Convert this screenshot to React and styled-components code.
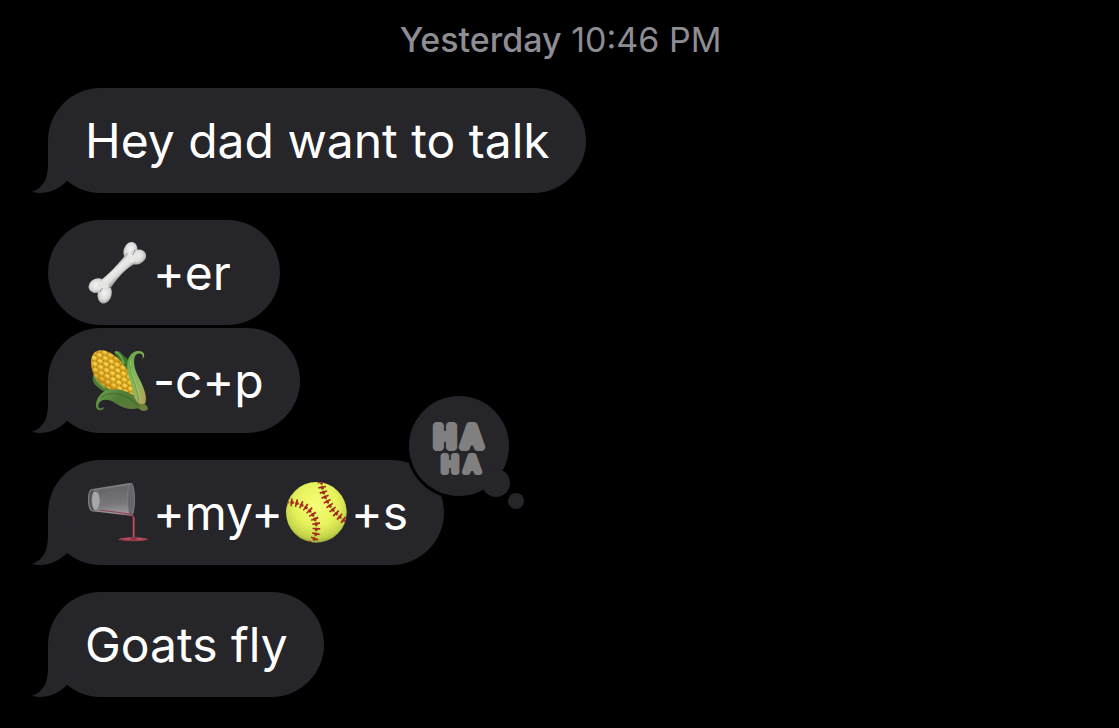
import React from 'react'
import styled, { createGlobalStyle } from 'styled-components'


const GlobalStyle = createGlobalStyle`
    * {
        box-sizing: border-box;
    }
    body {
        margin: 0;
        background-color: #000;
        font-family: Inter, "Liberation Sans", sans-serif;
    }
`

const Main = styled.main`
    display: flex;
    flex-direction: column;
    min-height: 100vh;
    padding: 20px 48px 31px;
`

const Timestamp = styled.time`
    align-self: center;
    margin-bottom: 28px;
    padding-left: 2px;
    font-size: 34px;
    line-height: 40px;
    color: #8d8d93;
    strong {
        font-weight: 500;
    }
`

const Thread = styled.ol`
    display: flex;
    flex-direction: column;
    align-items: flex-start;
    margin: 0;
    padding: 0;
    list-style: none;
`

const Bubble = styled.li`
    position: relative;
    display: flex;
    align-items: center;
    min-height: 105px;
    margin-bottom: ${props => props.$grouped ? '3px' : '27px'};
    padding: 0 36px 0 37px;
    border-radius: 53px;
    background-color: #26252a;
    color: #fff;
    font-size: 48px;
    line-height: 60px;
    white-space: pre;
    &:last-child {
        margin-bottom: 0;
    }
`

const TailShape = styled.svg`
    position: absolute;
    left: -16px;
    bottom: 0;
    width: 40px;
    height: 60px;
`

const Emoji = styled.svg`
    flex: none;
    width: 66px;
    height: 66px;
    margin-right: 2px;
`

const Reaction = styled.svg`
    position: absolute;
    right: -84px;
    top: -68px;
    width: 124px;
    height: 120px;
    font-family: Inter, "Liberation Sans", sans-serif;
    font-weight: 500;
`

const Tail = () => (
    <TailShape viewBox="0 0 40 60" aria-hidden="true">
        <path d="M16 8V31C16 46 11 55 0 59C12 62 25 58 35 48L36 8Z" fill="#26252a" />
    </TailShape>
)

const Bone = () => (
    <Emoji viewBox="15 15 198 198" role="img" aria-label="bone">
        <defs>
            <radialGradient id="knob" cx="48%" cy="44%" r="60%">
                <stop offset="0" stopColor="#f4f4f3" />
                <stop offset="0.6" stopColor="#dcdcdb" />
                <stop offset="1" stopColor="#9a9a9a" />
            </radialGradient>
            <linearGradient id="shaft" gradientUnits="userSpaceOnUse" x1="95" y1="95" x2="123" y2="125">
                <stop offset="0" stopColor="#a4a4a4" />
                <stop offset="0.35" stopColor="#ececeb" />
                <stop offset="0.7" stopColor="#e0e0df" />
                <stop offset="1" stopColor="#a0a0a0" />
            </linearGradient>
        </defs>
        <ellipse cx="151" cy="47" rx="20" ry="27" transform="rotate(20 151 47)" fill="url(#knob)" />
        <ellipse cx="171" cy="66" rx="28" ry="22" transform="rotate(-20 171 66)" fill="url(#knob)" />
        <ellipse cx="51" cy="152" rx="26" ry="21" transform="rotate(-25 51 152)" fill="url(#knob)" />
        <ellipse cx="74" cy="177" rx="21" ry="29" transform="rotate(14 74 177)" fill="url(#knob)" />
        <path d="M60 138C85 118 108 95 129 69L141 53L168 78L158 90C134 104 112 130 94 156L76 166Z" fill="url(#shaft)" />
        <ellipse cx="156" cy="68" rx="18" ry="15" transform="rotate(-30 156 68)" fill="#e6e6e5" />
        <ellipse cx="69" cy="153" rx="17" ry="15" fill="#e4e4e3" />
        <path d="M165 43Q164 54 157 60M60 172Q62 163 68 159" fill="none" stroke="#8f8f8f" strokeWidth="3" />
    </Emoji>
)

const Corn = () => (
    <Emoji viewBox="15 18 198 198" role="img" aria-label="corn">
        <defs>
            <pattern id="kernels" width="20" height="30" patternUnits="userSpaceOnUse" patternTransform="rotate(28)">
                <rect width="20" height="30" fill="#bb8413" />
                <g fill="#e6b82d">
                    <rect x="1" y="1" width="18" height="13" rx="6" />
                    <rect x="-9" y="16" width="18" height="13" rx="6" />
                    <rect x="11" y="16" width="18" height="13" rx="6" />
                </g>
                <g fill="#fbdc58">
                    <ellipse cx="10" cy="6" rx="6" ry="3" />
                    <ellipse cx="0" cy="21" rx="6" ry="3" />
                    <ellipse cx="20" cy="21" rx="6" ry="3" />
                </g>
            </pattern>
            <linearGradient id="cobShade" x1="0.2" y1="0.8" x2="0.7" y2="0.2">
                <stop offset="0" stopColor="#8b5200" stopOpacity="0.5" />
                <stop offset="0.4" stopColor="#c98600" stopOpacity="0" />
                <stop offset="0.8" stopColor="#c98600" stopOpacity="0" />
                <stop offset="1" stopColor="#8b5200" stopOpacity="0.3" />
            </linearGradient>
            <linearGradient id="husk" x1="0" y1="0" x2="0.6" y2="1">
                <stop offset="0" stopColor="#5c9f3f" />
                <stop offset="0.4" stopColor="#7fb558" />
                <stop offset="0.75" stopColor="#92b65d" />
                <stop offset="1" stopColor="#aca558" />
            </linearGradient>
            <linearGradient id="huskLow" x1="0" y1="0" x2="1" y2="0.4">
                <stop offset="0" stopColor="#72a84a" />
                <stop offset="0.5" stopColor="#4f7d36" />
                <stop offset="1" stopColor="#5d7a38" />
            </linearGradient>
        </defs>
        <path d="M102 31C111 22 122 29 130 40C136 47 143 48 145 57L143 91L128 78C121 59 111 43 102 31Z" fill="#3c742d" />
        <path d="M105 30Q122 32 132 65" fill="none" stroke="#6ea34a" strokeWidth="6" />
        <path d="M43 94C33 111 39 125 55 137L75 151L91 143C68 131 52 115 43 94Z" fill="#4d7d34" />
        <path d="M43 100Q50 121 75 139" fill="none" stroke="#78a852" strokeWidth="4" />
        <path d="M35 78C30 52 35 31 54 26C82 20 112 43 130 67C152 95 163 129 162 160C132 157 112 148 91 143C66 133 40 108 35 78Z" fill="url(#kernels)" />
        <path d="M35 78C30 52 35 31 54 26C82 20 112 43 130 67C152 95 163 129 162 160C132 157 112 148 91 143C66 133 40 108 35 78Z" fill="url(#cobShade)" />
        <path d="M71 200C64 208 49 207 48 193C46 178 56 156 76 146C99 137 135 142 160 159L184 183C198 185 208 197 201 204C192 211 180 205 175 199C150 205 126 196 108 185C91 173 70 168 59 181C52 190 55 201 64 199L70 195Z" fill="url(#huskLow)" />
        <path d="M61 169Q84 149 116 156Q149 164 175 191" fill="none" stroke="#315f2a" strokeWidth="4" opacity="0.5" />
        <path d="M187 51C192 39 184 32 173 35C158 41 160 70 171 96C184 123 204 157 196 184C190 190 178 187 173 181C160 168 159 149 154 129C149 106 138 89 142 65C144 42 157 28 174 27C193 26 198 42 187 51Z" fill="url(#husk)" />
        <path d="M153 52Q147 72 161 108Q178 149 184 183" fill="none" stroke="#b0cf77" strokeWidth="3" opacity="0.6" />
        <path d="M151 72Q151 96 165 128L177 176" fill="none" stroke="#639641" strokeWidth="2" />
        <path d="M184 184Q194 194 200 191L204 201Q193 210 181 201Z" fill="#6e823c" />
    </Emoji>
)

const PouringGlass = () => (
    <Emoji viewBox="15 15 198 198" role="img" aria-label="pouring liquid">
        <defs>
            <linearGradient id="glass" x1="0" y1="0" x2="0.15" y2="1">
                <stop offset="0" stopColor="#8b8b8f" />
                <stop offset="0.25" stopColor="#66666b" />
                <stop offset="0.7" stopColor="#77777b" />
                <stop offset="1" stopColor="#98989b" />
            </linearGradient>
        </defs>
        <path d="M35 42L148 24C158 23 163 46 163 74C163 103 161 121 153 122L36 109C28 108 24 93 24 75C24 57 27 43 35 42Z" fill="url(#glass)" />
        <ellipse cx="153" cy="73" rx="11" ry="49" fill="#66676c" stroke="#88888d" strokeWidth="2" />
        <path d="M49 43L147 27M49 43C60 55 60 95 48 107" fill="none" stroke="#8b8b90" strokeWidth="2" />
        <ellipse cx="46" cy="77" rx="13" ry="27" fill="#a6a7a9" />
        <path d="M35 44C23 50 24 99 37 108L46 107C32 99 32 53 47 43Z" fill="#4d4e54" stroke="#8e8e93" strokeWidth="2" />
        <path d="M58 105L151 117Q160 119 161 126V192" fill="none" stroke="#95404f" strokeWidth="3" />
        <path d="M110 114L150 121Q158 123 158 130V190H164V126L153 119Z" fill="#a84253" />
        <ellipse cx="160" cy="193" rx="45" ry="6" fill="#8f3948" />
        <path d="M119 191Q161 184 202 192Q162 199 119 191Z" fill="#b84f5f" />
        <ellipse cx="161" cy="191" rx="10" ry="4" fill="#8c3443" />
        <path d="M161 130V186" stroke="#d37586" strokeWidth="1" />
    </Emoji>
)

const Softball = () => (
    <Emoji viewBox="12 15 198 198" role="img" aria-label="softball">
        <defs>
            <radialGradient id="ball" cx="50%" cy="38%" r="65%">
                <stop offset="0" stopColor="#f6ff78" />
                <stop offset="0.55" stopColor="#e6f25c" />
                <stop offset="0.85" stopColor="#c2d248" />
                <stop offset="1" stopColor="#8a9b32" />
            </radialGradient>
            <clipPath id="ballClip">
                <circle cx="112" cy="112" r="91" />
            </clipPath>
        </defs>
        <circle cx="112" cy="112" r="91" fill="url(#ball)" />
        <g clipPath="url(#ballClip)" fill="none">
            <path d="M20 82C66 79 106 104 112 151Q114 181 99 206M127 19C132 70 157 111 205 143" stroke="#a7b943" strokeWidth="3" />
            <path d="M20 82C66 79 106 104 112 151Q114 181 99 206" stroke="#a42a20" strokeWidth="23" strokeDasharray="5 10" />
            <path d="M127 19C132 70 157 111 205 143" stroke="#a42a20" strokeWidth="23" strokeDasharray="5 10" />
            <path d="M20 82C66 79 106 104 112 151Q114 181 99 206M127 19C132 70 157 111 205 143" stroke="#a42a20" strokeWidth="8" strokeDasharray="9 6" />
        </g>
    </Emoji>
)

const HaHa = () => (
    <Reaction viewBox="0 0 124 120" role="img" aria-label="Ha ha reaction">
        <circle cx="55" cy="54" r="53" fill="#000" />
        <g fill="#26252a">
            <circle cx="55" cy="54" r="50" />
            <circle cx="92" cy="91" r="14" />
            <circle cx="112" cy="109" r="8" />
        </g>
        <g fill="#808080" stroke="#808080" strokeLinejoin="round" textAnchor="middle">
            <text x="41 68" y="55" fontSize="28" strokeWidth="8">HA</text>
            <text x="46 68" y="80" fontSize="22" strokeWidth="6">HA</text>
        </g>
    </Reaction>
)

const App = () => {
    return (
        <Main>
            <GlobalStyle />
            <Timestamp><strong>Yesterday</strong> 10:46 PM</Timestamp>
            <Thread>
                <Bubble><Tail />Hey dad want to talk</Bubble>
                <Bubble $grouped><Bone />{'+er '}</Bubble>
                <Bubble><Tail /><Corn />-c+p</Bubble>
                <Bubble>
                    <Tail /><PouringGlass />+my+<Softball />+s
                    <HaHa />
                </Bubble>
                <Bubble><Tail />Goats fly</Bubble>
            </Thread>
        </Main>
    )
}


export default App
